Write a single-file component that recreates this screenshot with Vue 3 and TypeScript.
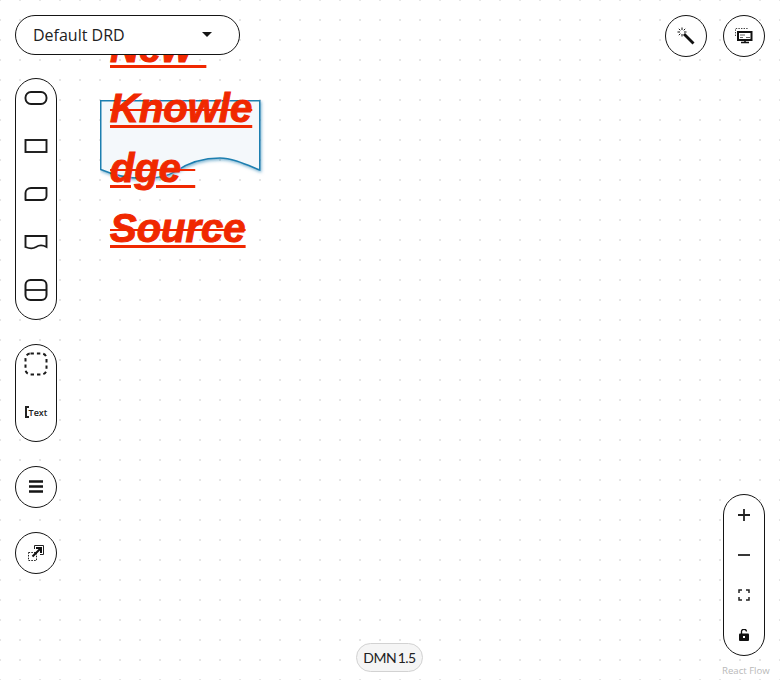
<script setup lang="ts">
const lines: string[] = ['New\u00a0', 'Knowle', 'dge\u00a0', 'Source']
</script>

<template>
  <div class="canvas">
    <div class="node">
      <svg class="node-shape" width="166" height="90" viewBox="0 0 166 90">
        <defs>
          <filter id="sh" x="-10%" y="-10%" width="120%" height="130%">
            <feDropShadow dx="1" dy="1.5" stdDeviation="1.5" flood-color="#006ba4" flood-opacity="0.5" />
          </filter>
        </defs>
        <path
          d="M0.75 0.75H159.75V70C145 64 132 58 120 58C103 58 88 63 76 71C62 80 30 82 0.75 69.5Z"
          fill="#f4f8fb"
          stroke="#1f7fb0"
          stroke-width="1.5"
          filter="url(#sh)"
        />
      </svg>
      <div class="node-label">
        <template v-for="(l, i) in lines" :key="i"><span class="under"><span class="strike">{{ l }}</span></span><br /></template>
      </div>
    </div>

    <div class="overlay">
      <div class="left">
        <div class="dropdown">
          <span>Default DRD</span>
          <i class="caret"></i>
        </div>
        <div class="pill palette-1">
          <div class="item item48">
            <svg width="24" height="16" viewBox="0 0 24 16"><rect x="1.5" y="2" width="21" height="12" rx="5.5" fill="none" stroke="#1a1a1a" stroke-width="1.9" /></svg>
          </div>
          <div class="item item48">
            <svg width="24" height="16" viewBox="0 0 24 16"><rect x="1.5" y="2" width="21" height="12" fill="none" stroke="#1a1a1a" stroke-width="1.9" /></svg>
          </div>
          <div class="item item48">
            <svg width="24" height="16" viewBox="0 0 24 16"><path d="M1.5 14V7C1.5 4 4 2 7 2H22.5V10C22.5 12 21 14 18 14Z" fill="none" stroke="#1a1a1a" stroke-width="1.9" stroke-linejoin="round" /></svg>
          </div>
          <div class="item item48">
            <svg width="24" height="16" viewBox="0 0 24 16"><path d="M1.5 2H22.5V13C18 10.5 15 11 12 13C8 15.5 5 14.5 1.5 13Z" fill="none" stroke="#1a1a1a" stroke-width="1.9" /></svg>
          </div>
          <div class="item item48">
            <svg width="24" height="24" viewBox="0 0 24 24"><rect x="1.5" y="2" width="21" height="20" rx="5" fill="none" stroke="#1a1a1a" stroke-width="2" /><path d="M1.5 12H22.5" stroke="#1a1a1a" stroke-width="1.8" /></svg>
          </div>
        </div>
        <div class="pill palette-2">
          <div class="item item48">
            <svg width="24" height="24" viewBox="0 0 24 24"><rect x="1.5" y="1.5" width="21" height="21" rx="5" fill="none" stroke="#1a1a1a" stroke-width="2" stroke-dasharray="3.4 3" /></svg>
          </div>
          <div class="item item48">
            <div class="text-tool"><i class="bracket"></i><span>Text</span></div>
          </div>
        </div>
        <div class="round round-hamb">
          <svg width="14" height="14" viewBox="0 0 14 14"><path d="M0 1.5H14M0 6.5H14M0 11.5H14" stroke="#151515" stroke-width="2.6" /></svg>
        </div>
        <div class="round round-last">
          <svg width="16" height="16" viewBox="0 0 16 16">
            <rect x="0.5" y="7.5" width="8" height="8" fill="none" stroke="#222" stroke-dasharray="1.6 1.2" />
            <path d="M6.5 4V0.5H15.5V9.5H12" fill="none" stroke="#222" stroke-width="1" />
            <path d="M4.5 11.5L12.5 3.5M8 3H13V8" fill="none" stroke="#111" stroke-width="2" />
          </svg>
        </div>
      </div>

      <div class="right-top">
        <div class="round">
          <svg width="18" height="18" viewBox="0 0 18 18">
            <path d="M7 7L16.5 16.5" stroke="#111" stroke-width="2.8" />
            <path d="M5 0.5V3M5 7V9.5M0.5 5H3M7 5H9.5M1.8 1.8L3.3 3.3M8.2 1.8L6.7 3.3M1.8 8.2L3.3 6.7" stroke="#111" stroke-width="1" />
          </svg>
        </div>
        <div class="round">
          <svg width="18" height="16" viewBox="0 0 18 16">
            <path d="M0.5 8V0.5H13" fill="none" stroke="#444" stroke-dasharray="1.4 1.2" />
            <rect x="3" y="4" width="13.5" height="8" fill="#fff" stroke="#111" stroke-width="2" />
            <path d="M5 7H10M5 9.5H8M11 9.5H15" stroke="#666" stroke-width="1" />
            <path d="M10 12V14M6 14.5H14" stroke="#111" stroke-width="1.6" />
          </svg>
        </div>
      </div>

      <div class="zoom-panel">
        <div class="item item40">
          <svg width="14" height="14" viewBox="0 0 14 14"><path d="M7 1V13M1 7H13" stroke="#222" stroke-width="1.8" /></svg>
        </div>
        <div class="item item40">
          <svg width="14" height="14" viewBox="0 0 14 14"><path d="M1 7H13" stroke="#222" stroke-width="1.8" /></svg>
        </div>
        <div class="item item40">
          <svg width="12" height="12" viewBox="0 0 12 12"><path d="M1 4V1H4M8 1H11V4M11 8V11H8M4 11H1V8" fill="none" stroke="#222" stroke-width="1.5" /></svg>
        </div>
        <div class="item item40">
          <svg width="10" height="12" viewBox="0 0 10 12"><rect x="0" y="4.5" width="10" height="7.5" rx="1" fill="#111" /><path d="M2.5 5V3A2.5 2.5 0 0 1 7.5 2.5" fill="none" stroke="#111" stroke-width="1.3" /><rect x="4" y="7" width="2" height="2" fill="#fff" /></svg>
        </div>
      </div>

      <div class="version">DMN 1.5</div>
      <div class="attribution">React Flow</div>
    </div>
  </div>
</template>

<style>
html, body { margin: 0; padding: 0; background: #fff; }
</style>

<style scoped>
.canvas {
  position: relative;
  width: 780px;
  height: 680px;
  overflow: hidden;
  background-color: #fff;
  background-image: radial-gradient(circle, #e6e6e6 1px, transparent 1.1px);
  background-size: 20px 20px;
  background-position: 10px 10px;
}
.node {
  position: absolute;
  left: 100px;
  top: 100px;
  width: 160px;
  height: 80px;
}
.node-shape { position: absolute; left: 0; top: 0; }
.node-label {
  position: absolute;
  left: 10px;
  top: -82px;
  font-family: "Liberation Sans", sans-serif;
  font-size: 40px;
  font-weight: 700;
  font-style: italic;
  line-height: 60px;
  color: #f02800;
  word-spacing: 3px;
  -webkit-text-stroke: 1px #f02800;
  white-space: nowrap;
}
.under { text-decoration: underline; text-decoration-thickness: 3px; text-underline-offset: 3px; }
.strike { text-decoration: line-through; text-decoration-thickness: 2px; }
.overlay { position: absolute; inset: 0; }
.left {
  position: absolute;
  left: 15px;
  top: 15px;
  display: flex;
  flex-direction: column;
  align-items: flex-start;
}
.dropdown {
  box-sizing: border-box;
  width: 225px;
  height: 40px;
  border: 1px solid #151515;
  border-radius: 20px;
  background: #fff;
  display: flex;
  align-items: center;
  justify-content: space-between;
  padding: 0 27px 0 17px;
  font-family: "Open Sans", sans-serif;
  font-size: 16px;
  color: #222;
  margin-bottom: 23px;
}
.caret {
  width: 0;
  height: 0;
  border-left: 5px solid transparent;
  border-right: 5px solid transparent;
  border-top: 5px solid #151515;
  margin-top: -1px;
}
.pill {
  box-sizing: border-box;
  width: 42px;
  border: 1px solid #151515;
  border-radius: 21px;
  background: #fff;
  display: flex;
  flex-direction: column;
}
.palette-1, .palette-2 { margin-bottom: 24px; }
.item { display: flex; align-items: center; justify-content: center; }
.item48 { box-sizing: border-box; height: 48px; padding-bottom: 10px; }
.item40 { height: 40px; }
.round {
  box-sizing: border-box;
  width: 42px;
  height: 42px;
  border: 1px solid #151515;
  border-radius: 50%;
  background: #fff;
  display: flex;
  align-items: center;
  justify-content: center;
}
.round-hamb { margin-bottom: 24px; }
.text-tool {
  display: flex;
  align-items: center;
  font-family: "Open Sans", sans-serif;
  font-size: 9px;
  font-weight: 600;
  color: #222;
}
.bracket {
  box-sizing: border-box;
  width: 4px;
  height: 12px;
  border: 2px solid #222;
  border-right: 0;
  margin-right: 0;
}
.right-top {
  position: absolute;
  right: 15px;
  top: 15px;
  display: flex;
  gap: 16px;
}
.zoom-panel {
  position: absolute;
  left: 723px;
  top: 494px;
  box-sizing: border-box;
  width: 42px;
  height: 162px;
  border: 1px solid #151515;
  border-radius: 21px;
  background: #fff;
  display: flex;
  flex-direction: column;
}
.version {
  position: absolute;
  left: 356px;
  top: 643px;
  box-sizing: border-box;
  width: 67px;
  height: 29px;
  border: 1px solid #d2d2d2;
  border-radius: 15px;
  background: #f5f5f5;
  display: flex;
  align-items: center;
  justify-content: center;
  font-family: Lato, sans-serif;
  font-size: 14px;
  letter-spacing: -0.5px;
  word-spacing: -1.5px;
  color: #222;
}
.attribution {
  position: absolute;
  left: 722px;
  top: 665px;
  font-family: "Open Sans", sans-serif;
  font-size: 9.6px;
  line-height: 12px;
  color: #b9b9b9;
}
</style>
